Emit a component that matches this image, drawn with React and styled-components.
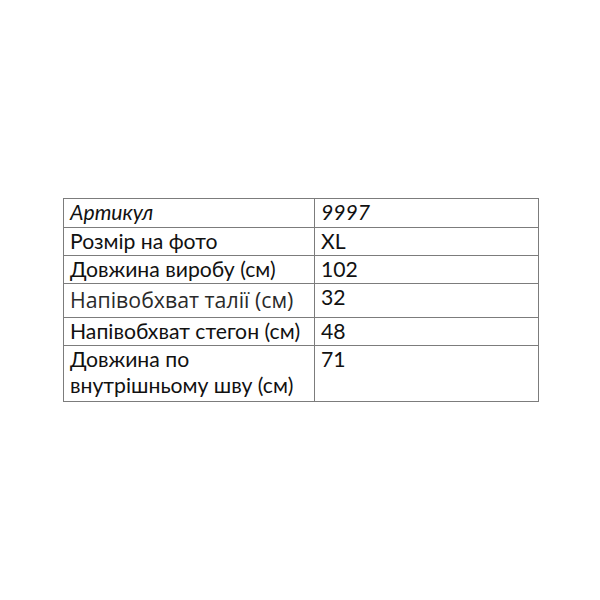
import React from 'react'
import styled, { createGlobalStyle } from 'styled-components'

const GlobalStyle = createGlobalStyle`
  html, body {
    margin: 0;
    padding: 0;
    background: #ffffff;
  }
`

const Page = styled.div`
  width: 600px;
  height: 600px;
  box-sizing: border-box;
  padding: 198px 0 0 63px;
  background: #ffffff;
`

const Table = styled.table`
  border-collapse: collapse;
  table-layout: fixed;
  width: 475px;
  font-family: Lato, "Open Sans", sans-serif;
  font-size: 21.2px;
  color: #111111;
`

const Row = styled.tr`
  height: ${p => p.h}px;
`

const Cell = styled.td`
  border: 1px solid #7c7c7c;
  padding: 0 6px;
  vertical-align: top;
  font-style: ${p => (p.italic ? 'italic' : 'normal')};
  font-family: ${p => (p.big ? '"Open Sans", sans-serif' : 'inherit')};
  font-size: ${p => (p.big ? '21.3px' : 'inherit')};
  color: ${p => (p.big ? '#2a2a2a' : 'inherit')};
  line-height: ${p => (p.big ? '32px' : '26px')};
  white-space: pre-line;
  overflow: hidden;
`

const rows = [
  { label: 'Артикул', value: '9997', h: 29, italic: true },
  { label: 'Розмір на фото', value: 'XL', h: 28 },
  { label: 'Довжина виробу (см)', value: '102', h: 28 },
  { label: 'Напівобхват талії (см)', value: '32', h: 34, big: true },
  { label: 'Напівобхват стегон (см)', value: '48', h: 28 },
  { label: 'Довжина по\nвнутрішньому шву (см)', value: '71', h: 56 },
]

const App = () => {
  return (
    <>
      <GlobalStyle />
      <Page>
        <Table>
          <colgroup>
            <col style={{ width: 251 }} />
            <col style={{ width: 224 }} />
          </colgroup>
          <tbody>
            {rows.map(r => (
              <Row key={r.label} h={r.h}>
                <Cell italic={r.italic} big={r.big}>{r.label}</Cell>
                <Cell italic={r.italic}>{r.value}</Cell>
              </Row>
            ))}
          </tbody>
        </Table>
      </Page>
    </>
  )
}

export default App
